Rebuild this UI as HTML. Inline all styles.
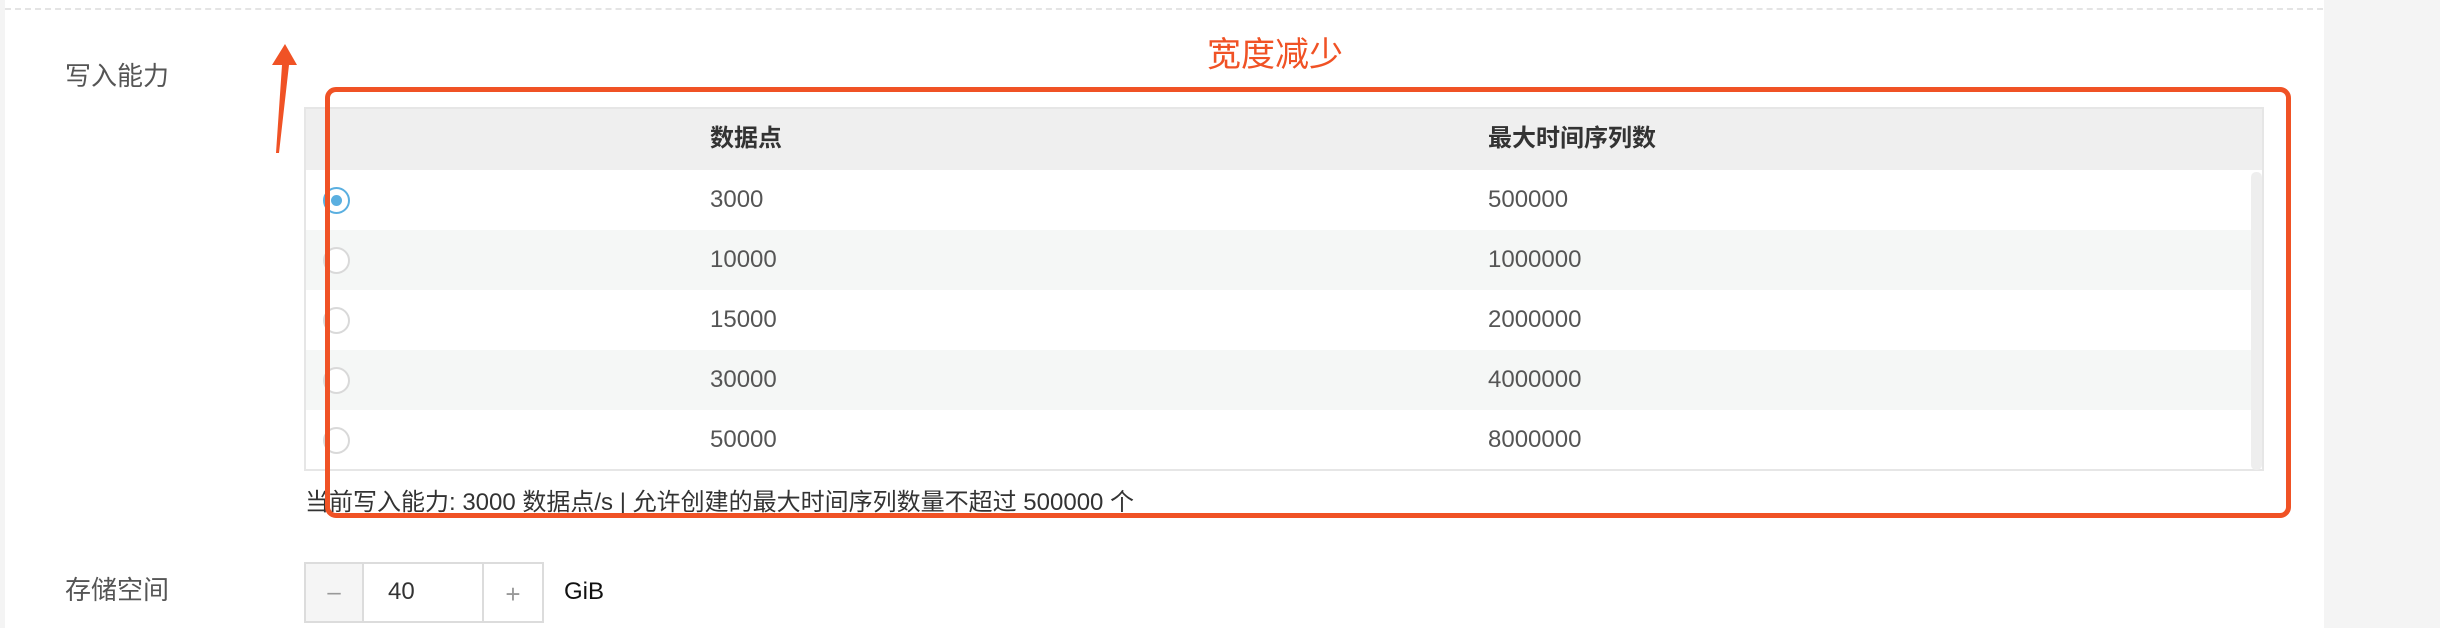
<!DOCTYPE html>
<html><head><meta charset="utf-8"><style>
*{margin:0;padding:0;box-sizing:border-box}
body{width:2440px;height:628px;position:relative;background:#fff;overflow:hidden;font-family:"Liberation Sans","Noto Sans CJK SC",sans-serif;}
.a{position:absolute;white-space:nowrap}
.lbl{font-size:26px;color:#555;line-height:30px}
.tb{position:absolute;left:304px;top:107px;width:1960px;height:364px;border:2px solid #e6e6e6;background:#fff}
.row{position:absolute;left:0;width:1945px;height:60px}
.t{position:absolute;font-size:24px;color:#555;line-height:60px}
.radio{position:absolute;left:323px;width:27px;height:27px;border:2px solid #d9d9d9;border-radius:50%;background:#fff}
</style></head><body>
<div class="a" style="left:0;top:0;width:5px;height:628px;background:#f4f4f4"></div>
<div class="a" style="left:5px;top:8px;width:2318px;border-top:2px dashed #e4e4e4"></div>
<div class="a" style="left:2324px;top:0;width:116px;height:628px;background:#f4f4f4"></div>
<div class="a lbl" style="left:65px;top:61px">写入能力</div>
<div class="a lbl" style="left:65px;top:575px">存储空间</div>

<div class="tb">
<div class="row" style="top:0;height:61px;width:1956px;background:#efefef"></div>
<div class="row" style="top:61px"></div>
<div class="row" style="top:121px;background:#f5f7f6"></div>
<div class="row" style="top:181px"></div>
<div class="row" style="top:241px;background:#f5f7f6"></div>
<div class="row" style="top:301px"></div>
<div style="position:absolute;left:1945px;top:63px;width:11px;height:298px;background:#eeeeee;border-radius:5px"></div>
<div class="t" style="left:404px;top:0;font-weight:bold;color:#333">数据点</div>
<div class="t" style="left:1182px;top:0;font-weight:bold;color:#333">最大时间序列数</div>
<div class="t" style="left:404px;top:61px">3000</div><div class="t" style="left:1182px;top:61px">500000</div>
<div class="t" style="left:404px;top:121px">10000</div><div class="t" style="left:1182px;top:121px">1000000</div>
<div class="t" style="left:404px;top:181px">15000</div><div class="t" style="left:1182px;top:181px">2000000</div>
<div class="t" style="left:404px;top:241px">30000</div><div class="t" style="left:1182px;top:241px">4000000</div>
<div class="t" style="left:404px;top:301px">50000</div><div class="t" style="left:1182px;top:301px">8000000</div>
</div>
<div class="radio" style="top:187px;border-color:#5aafe0"><div style="position:absolute;left:6px;top:6px;width:11px;height:11px;border-radius:50%;background:#5aafe0"></div></div>
<div class="radio" style="top:247px"></div>
<div class="radio" style="top:307px"></div>
<div class="radio" style="top:367px"></div>
<div class="radio" style="top:427px"></div>

<div class="a" style="left:305px;top:488px;font-size:24px;color:#333;line-height:30px">当前写入能力: 3000 数据点/s | 允许创建的最大时间序列数量不超过 500000 个</div>

<div class="a" style="left:304px;top:562px;width:240px;height:61px;border:2px solid #dcdcdc;background:#fff"></div>
<div class="a" style="left:306px;top:564px;width:58px;height:57px;background:#f5f5f5;border-right:2px solid #dcdcdc;color:#999;font-size:24px;text-align:center;line-height:57px">–</div>
<div class="a" style="left:482px;top:564px;width:60px;height:57px;border-left:2px solid #dcdcdc;color:#999;font-size:26px;text-align:center;line-height:60px">+</div>
<div class="a" style="left:388px;top:576px;font-size:24px;color:#333;line-height:32px">40</div>
<div class="a" style="left:564px;top:576px;font-size:24px;color:#111;line-height:32px">GiB</div>

<div class="a" style="left:325px;top:87px;width:1966px;height:431px;border:5px solid #f05225;border-radius:11px"></div>
<div class="a" style="left:1207px;top:34px;font-size:34px;color:#f05225;line-height:42px">宽度减少</div>
<svg class="a" style="left:0;top:0" width="400" height="200"><polygon points="285,44 297,65 289,65 279,153 276,153 282,65 272,65" fill="#f05225"/></svg>
</body></html>
